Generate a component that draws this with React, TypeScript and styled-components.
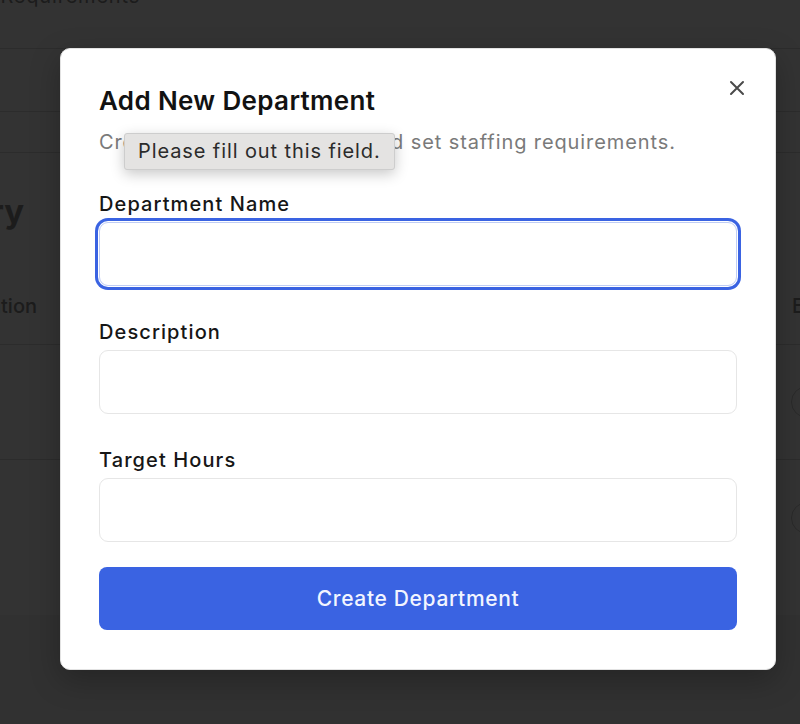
import React from 'react';
import styled, { createGlobalStyle } from 'styled-components';

const Global = createGlobalStyle`
  html, body { margin: 0; padding: 0; }
  body { font-family: Inter, "Noto Sans", "Liberation Sans", sans-serif; background: #fff; }
  * { box-sizing: border-box; }
`;

const Page = styled.div`
  position: relative;
  width: 800px;
  height: 724px;
  overflow: hidden;
  background: #f2f2f2;
  color: #8a8a8a;
`;

const Card = styled.div`
  background: #fff;
  height: 615px;
  display: flex;
  flex-direction: column;
`;

const Band = styled.div<{ $h: number }>`
  height: ${(p) => p.$h}px;
  flex: none;
  border-bottom: 1px solid #dcdcdc;
  overflow: hidden;
`;

const Clip = styled.div<{ $w: number }>`
  width: ${(p) => p.$w}px;
  overflow: hidden;
  display: flex;
  justify-content: flex-end;
  white-space: nowrap;
`;

const TopText = styled.span`
  font-size: 20px;
  line-height: 24px;
  margin-top: -16px;
  letter-spacing: 0.8px;
`;

const HeadingBlock = styled.div`
  height: 122px;
  flex: none;
  padding-top: 38px;
`;

const Heading = styled.span`
  font-size: 33px;
  line-height: 40px;
  font-weight: 700;
  color: #8c8c8c;
`;

const TableRow = styled.div<{ $h: number; $border?: boolean }>`
  height: ${(p) => p.$h}px;
  flex: none;
  display: flex;
  align-items: center;
  justify-content: space-between;
  border-bottom: ${(p) => (p.$border ? '1px solid #dcdcdc' : 'none')};
`;

const HeaderText = styled.span`
  font-size: 20px;
  line-height: 24px;
  font-weight: 500;
  padding-bottom: 8px;
`;

const RightClip = styled.div<{ $w: number }>`
  width: ${(p) => p.$w}px;
  overflow: hidden;
  white-space: nowrap;
  display: flex;
  justify-content: flex-start;
`;

const HeaderRight = styled.span`
  font-size: 20px;
  line-height: 24px;
  font-weight: 500;
  padding-bottom: 8px;
`;

const RoundBtn = styled.div`
  width: 32px;
  height: 32px;
  flex: none;
  border-radius: 50%;
  border: 1px solid #cfcfcf;
`;

const Overlay = styled.div`
  position: absolute;
  inset: 0;
  background: rgba(0, 0, 0, 0.8);
`;

const Modal = styled.div`
  position: absolute;
  left: 60px;
  top: 48px;
  width: 716px;
  height: 622px;
  background: #fff;
  border: 1px solid #e2e2e2;
  border-radius: 10px;
  padding: 36px 38px 39px;
  box-shadow: 0 10px 30px rgba(0, 0, 0, 0.25);
  display: flex;
  flex-direction: column;
  color: #111;
`;

const Title = styled.h2`
  margin: 0;
  font-size: 26px;
  line-height: 32px;
  font-weight: 600;
  letter-spacing: 0.35px;
  color: #121212;
`;

const Subtitle = styled.p`
  margin: 11px 0 0;
  font-size: 20px;
  line-height: 28px;
  letter-spacing: 0.9px;
  color: #7a7a7a;
`;

const Form = styled.form`
  margin-top: 34px;
  display: flex;
  flex-direction: column;
  gap: 32px;
`;

const Field = styled.div`
  display: flex;
  flex-direction: column;
  gap: 4px;
`;

const Label = styled.label`
  font-size: 20px;
  line-height: 28px;
  font-weight: 500;
  letter-spacing: 1.1px;
  color: #161616;
`;

const Input = styled.input<{ $focused?: boolean }>`
  height: 64px;
  width: 100%;
  border-radius: 9px;
  border: 1px solid ${(p) => (p.$focused ? '#bfcdf5' : '#e6e6e6')};
  box-shadow: ${(p) => (p.$focused ? '0 0 0 1px #fff, 0 0 0 4px #3a63e2' : 'none')};
  background: #fff;
  outline: none;
  font: inherit;
  font-size: 20px;
  padding: 0 16px;
`;

const SubmitButton = styled.button`
  margin-top: -7px;
  height: 63px;
  width: 100%;
  border: none;
  border-radius: 8px;
  background: #3a63e2;
  color: #f2f5ff;
  font-family: inherit;
  font-size: 21px;
  font-weight: 500;
  letter-spacing: 0.65px;
  cursor: pointer;
`;

const CloseButton = styled.button`
  position: absolute;
  top: 31px;
  right: 30px;
  width: 16px;
  height: 16px;
  padding: 0;
  border: none;
  background: none;
  display: flex;
  color: #4a4a4a;
  cursor: pointer;
`;

const Bubble = styled.div`
  position: absolute;
  left: 63px;
  top: 84px;
  height: 37px;
  padding: 0 13px;
  background: #e4e3e2;
  border: 1px solid #cdcdcd;
  border-radius: 3px;
  box-shadow: 0 4px 14px rgba(0, 0, 0, 0.22);
  font-size: 20px;
  line-height: 35px;
  letter-spacing: 0.9px;
  color: #2b2b2b;
  white-space: nowrap;
`;

export default function App() {
  return (
    <Page>
      <Global />
      <Card>
        <Band $h={49}>
          <Clip $w={140}>
            <TopText>Staffing Requirements</TopText>
          </Clip>
        </Band>
        <Band $h={63} />
        <Band $h={41} />
        <HeadingBlock>
          <Clip $w={24}>
            <Heading>Department Directory</Heading>
          </Clip>
        </HeadingBlock>
        <TableRow $h={70} $border>
          <Clip $w={37}>
            <HeaderText>Location</HeaderText>
          </Clip>
          <RightClip $w={8}>
            <HeaderRight>Employees</HeaderRight>
          </RightClip>
        </TableRow>
        <TableRow $h={115} $border>
          <span />
          <RightClip $w={9}>
            <RoundBtn />
          </RightClip>
        </TableRow>
        <TableRow $h={115}>
          <span />
          <RightClip $w={9}>
            <RoundBtn />
          </RightClip>
        </TableRow>
      </Card>
      <Overlay />
      <Modal role="dialog">
        <Title>Add New Department</Title>
        <Subtitle>Create a new department and set staffing requirements.</Subtitle>
        <Form onSubmit={(e) => e.preventDefault()}>
          <Field>
            <Label>Department Name</Label>
            <Input $focused />
          </Field>
          <Field>
            <Label>Description</Label>
            <Input />
          </Field>
          <Field>
            <Label>Target Hours</Label>
            <Input />
          </Field>
          <SubmitButton type="submit">Create Department</SubmitButton>
        </Form>
        <CloseButton aria-label="Close">
          <svg width="16" height="16" viewBox="0 0 16 16" fill="none" stroke="currentColor" strokeWidth="2" strokeLinecap="round">
            <path d="M2 2l12 12M14 2L2 14" />
          </svg>
        </CloseButton>
        <Bubble>Please fill out this field.</Bubble>
      </Modal>
    </Page>
  );
}
